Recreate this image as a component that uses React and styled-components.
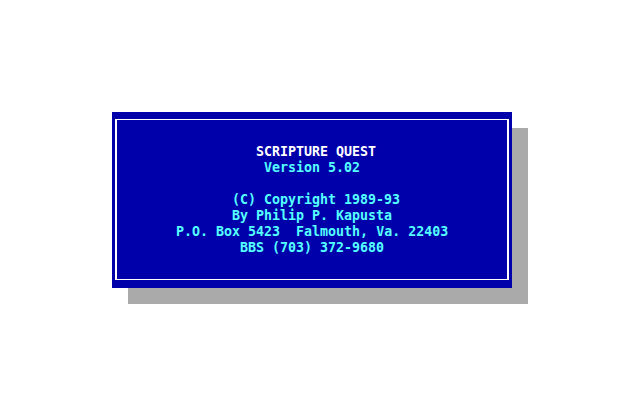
import React from "react";
import styled, { createGlobalStyle } from "styled-components";

const Global = createGlobalStyle`
  html, body { margin: 0; padding: 0; background: #ffffff; }
  #root { width: 640px; height: 400px; }
`;

const Screen = styled.div`
  width: 640px;
  height: 400px;
  box-sizing: border-box;
  padding: 112px 0 0 112px;
  background: #ffffff;
  font-family: "DejaVu Sans Mono", "Liberation Mono", monospace;
  font-weight: bold;
  font-size: 13.3px;
  line-height: 16px;
`;

const Dialog = styled.div`
  width: 400px;
  height: 176px;
  box-sizing: border-box;
  padding: 7px 3px 8px 3px;
  background: #0000aa;
  box-shadow: 16px 16px 0 #aaaaaa;
`;

const Frame = styled.div`
  height: 100%;
  box-sizing: border-box;
  border-style: solid;
  border-color: #ffffff;
  border-width: 1px 2px;
  padding-top: 24px;
  display: flex;
  flex-direction: column;
`;

const Line = styled.div`
  height: 16px;
  white-space: pre;
  color: ${(p) => (p.$bright ? "#ffffff" : "#55ffff")};
  margin-left: ${(p) => p.$col * 8 - 5}px;
  letter-spacing: 0px;
`;

const lines = [
  { text: "SCRIPTURE QUEST", col: 18, bright: true },
  { text: "Version 5.02", col: 19 },
  { text: "", col: 0 },
  { text: "(C) Copyright 1989-93", col: 15 },
  { text: "By Philip P. Kapusta", col: 15 },
  { text: "P.O. Box 5423  Falmouth, Va. 22403", col: 8 },
  { text: "BBS (703) 372-9680", col: 16 },
];

export default function App() {
  return (
    <>
      <Global />
      <Screen>
        <Dialog>
          <Frame>
            {lines.map((l, i) => (
              <Line key={i} $col={l.col} $bright={l.bright}>
                {l.text}
              </Line>
            ))}
          </Frame>
        </Dialog>
      </Screen>
    </>
  );
}
